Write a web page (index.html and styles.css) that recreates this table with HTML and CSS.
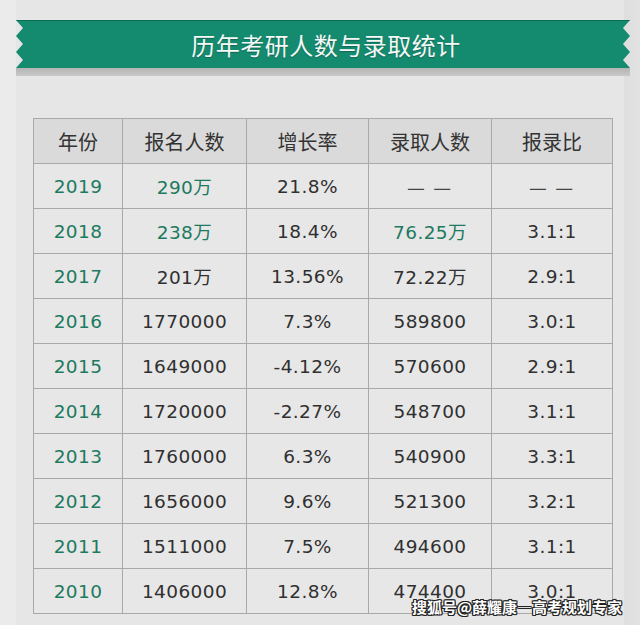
FILE: index.html
```html
<!DOCTYPE html>
<html lang="zh">
<head>
<meta charset="utf-8">
<link rel="stylesheet" href="styles.css">
</head>
<body>
<div class="page">
  <div class="banner">
    <div class="banner-face"><h1 class="title">历年考研人数与录取统计</h1></div>
    <div class="banner-shadow"></div>
  </div>
  <table class="stats">
    <thead>
      <tr><th class="c1">年份</th><th class="c2">报名人数</th><th class="c3">增长率</th><th class="c4">录取人数</th><th class="c5">报录比</th></tr>
    </thead>
    <tbody>
      <tr><td class="yr">2019</td><td class="hl">290万</td><td>21.8%</td><td class="dash">— —</td><td class="dash">— —</td></tr>
      <tr><td class="yr">2018</td><td class="hl">238万</td><td>18.4%</td><td class="hl">76.25万</td><td>3.1:1</td></tr>
      <tr><td class="yr">2017</td><td>201万</td><td>13.56%</td><td>72.22万</td><td>2.9:1</td></tr>
      <tr><td class="yr">2016</td><td>1770000</td><td>7.3%</td><td>589800</td><td>3.0:1</td></tr>
      <tr><td class="yr">2015</td><td>1649000</td><td>-4.12%</td><td>570600</td><td>2.9:1</td></tr>
      <tr><td class="yr">2014</td><td>1720000</td><td>-2.27%</td><td>548700</td><td>3.1:1</td></tr>
      <tr><td class="yr">2013</td><td>1760000</td><td>6.3%</td><td>540900</td><td>3.3:1</td></tr>
      <tr><td class="yr">2012</td><td>1656000</td><td>9.6%</td><td>521300</td><td>3.2:1</td></tr>
      <tr><td class="yr">2011</td><td>1511000</td><td>7.5%</td><td>494600</td><td>3.1:1</td></tr>
      <tr><td class="yr">2010</td><td>1406000</td><td>12.8%</td><td>474400</td><td>3.0:1</td></tr>
    </tbody>
  </table>
  <div class="watermark">搜狐号@薛耀康—高考规划专家</div>
</div>
</body>
</html>
```
FILE: styles.css
```css
html, body {
  margin: 0;
  padding: 0;
}
body {
  background: #e4e4e4;
  width: 640px;
  height: 625px;
  overflow: hidden;
}
.page {
  position: relative;
  width: 640px;
  height: 625px;
  background: linear-gradient(to right, #ebebeb 0, #ebebeb 16px, #e6e6e6 16px, #e6e6e6 624px, #dedede 624px, #e2e2e2 640px);
  padding-top: 20px;
  box-sizing: border-box;
}
.banner {
  margin-left: 16px;
  width: 614px;
  height: 56px;
  display: flex;
  flex-direction: column;
  clip-path: polygon(0 0, 100% 0, calc(100% - 7px) 8px, 100% 16px, calc(100% - 7px) 24px, 100% 32px, calc(100% - 7px) 40px, 100% 48px, 100% 56px, 0 56px, 0 48px, 7px 40px, 0 32px, 7px 24px, 0 16px, 7px 8px);
}
.banner-face {
  height: 48px;
  background: #148a6f;
  border-top: 1px solid #0c6b55;
  box-sizing: border-box;
  display: flex;
  align-items: center;
  justify-content: center;
}
.banner-shadow {
  height: 8px;
  background: linear-gradient(#b4b4b4, #c8c8c8);
}
.title {
  margin: 0;
  padding-left: 6px;
  font-family: "Noto Sans CJK SC", sans-serif;
  font-weight: 400;
  font-size: 24px;
  letter-spacing: 0.5px;
  color: #f4f8f6;
  text-shadow: 0 1px 1px rgba(0,0,0,0.25);
}
.stats {
  margin-top: 42px;
  margin-left: 33px;
  width: 579px;
  border-collapse: collapse;
  table-layout: fixed;
  font-family: "DejaVu Sans", "Noto Sans CJK SC", sans-serif;
  color: #303030;
}
.stats th, .stats td {
  border: 1px solid #a9a9a9;
  height: 44px;
  padding: 0;
  text-align: center;
  vertical-align: middle;
}
.stats th {
  background: #dadada;
  font-family: "Noto Sans CJK SC", sans-serif;
  font-weight: 400;
  font-size: 20px;
  color: #333;
}
.stats td {
  background: #e7e7e7;
  font-size: 18.5px;
  letter-spacing: 0.4px;
}
.c1 { width: 88px; }
.c2 { width: 123px; }
.c3 { width: 121px; }
.c4 { width: 122px; }
.c5 { width: 120px; }
.stats td.yr, .stats td.hl {
  color: #1d7a5f;
}
.stats td.dash {
  font-family: "Noto Sans CJK SC", sans-serif;
  font-size: 20px;
  letter-spacing: 2px;
  color: #444;
}
.watermark {
  position: absolute;
  left: 412px;
  top: 596px;
  font-family: "Noto Sans CJK SC", sans-serif;
  font-weight: 700;
  font-size: 15px;
  color: #fff;
  text-shadow: -1px -1px 0 #222, 1px -1px 0 #222, -1px 1px 0 #222, 1px 1px 0 #222, 0 1px 0 #222, 0 -1px 0 #222, 1px 0 0 #222, -1px 0 0 #222;
}
```
